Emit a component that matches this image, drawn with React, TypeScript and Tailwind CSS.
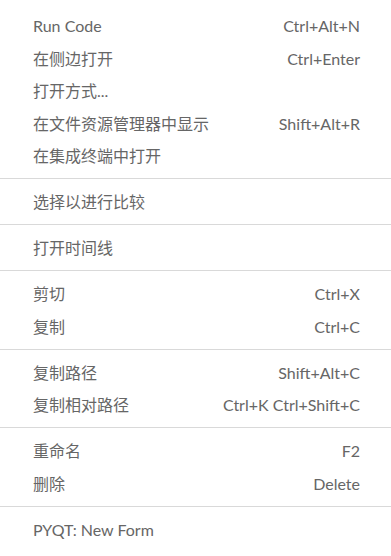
import React from "react";

type Item = { label: string; keys?: string };

const groups: Item[][] = [
  [
    { label: "Run Code", keys: "Ctrl+Alt+N" },
    { label: "在侧边打开", keys: "Ctrl+Enter" },
    { label: "打开方式..." },
    { label: "在文件资源管理器中显示", keys: "Shift+Alt+R" },
    { label: "在集成终端中打开" },
  ],
  [{ label: "选择以进行比较" }],
  [{ label: "打开时间线" }],
  [
    { label: "剪切", keys: "Ctrl+X" },
    { label: "复制", keys: "Ctrl+C" },
  ],
  [
    { label: "复制路径", keys: "Shift+Alt+C" },
    { label: "复制相对路径", keys: "Ctrl+K Ctrl+Shift+C" },
  ],
  [
    { label: "重命名", keys: "F2" },
    { label: "删除", keys: "Delete" },
  ],
  [{ label: "PYQT: New Form" }],
];

const Row: React.FC<{ item: Item }> = ({ item }) => (
  <div className="flex h-[32.5px] items-center justify-between pl-[33px] pr-[31px]">
    <span>{item.label}</span>
    {item.keys && <span>{item.keys}</span>}
  </div>
);

export default function App() {
  return (
    <div
      className="h-[556px] w-[391px] overflow-hidden bg-white pt-[10px] text-[16px] text-[#666666]"
      style={{ fontFamily: 'Lato, "Noto Sans CJK SC", sans-serif' }}
    >
      {groups.map((g, i) => (
        <div key={i}>
          {i > 0 && <div className="mb-[7px] mt-[5.5px] h-px bg-[#d9d9d9]" />}
          {g.map((item) => (
            <Row key={item.label} item={item} />
          ))}
        </div>
      ))}
    </div>
  );
}
